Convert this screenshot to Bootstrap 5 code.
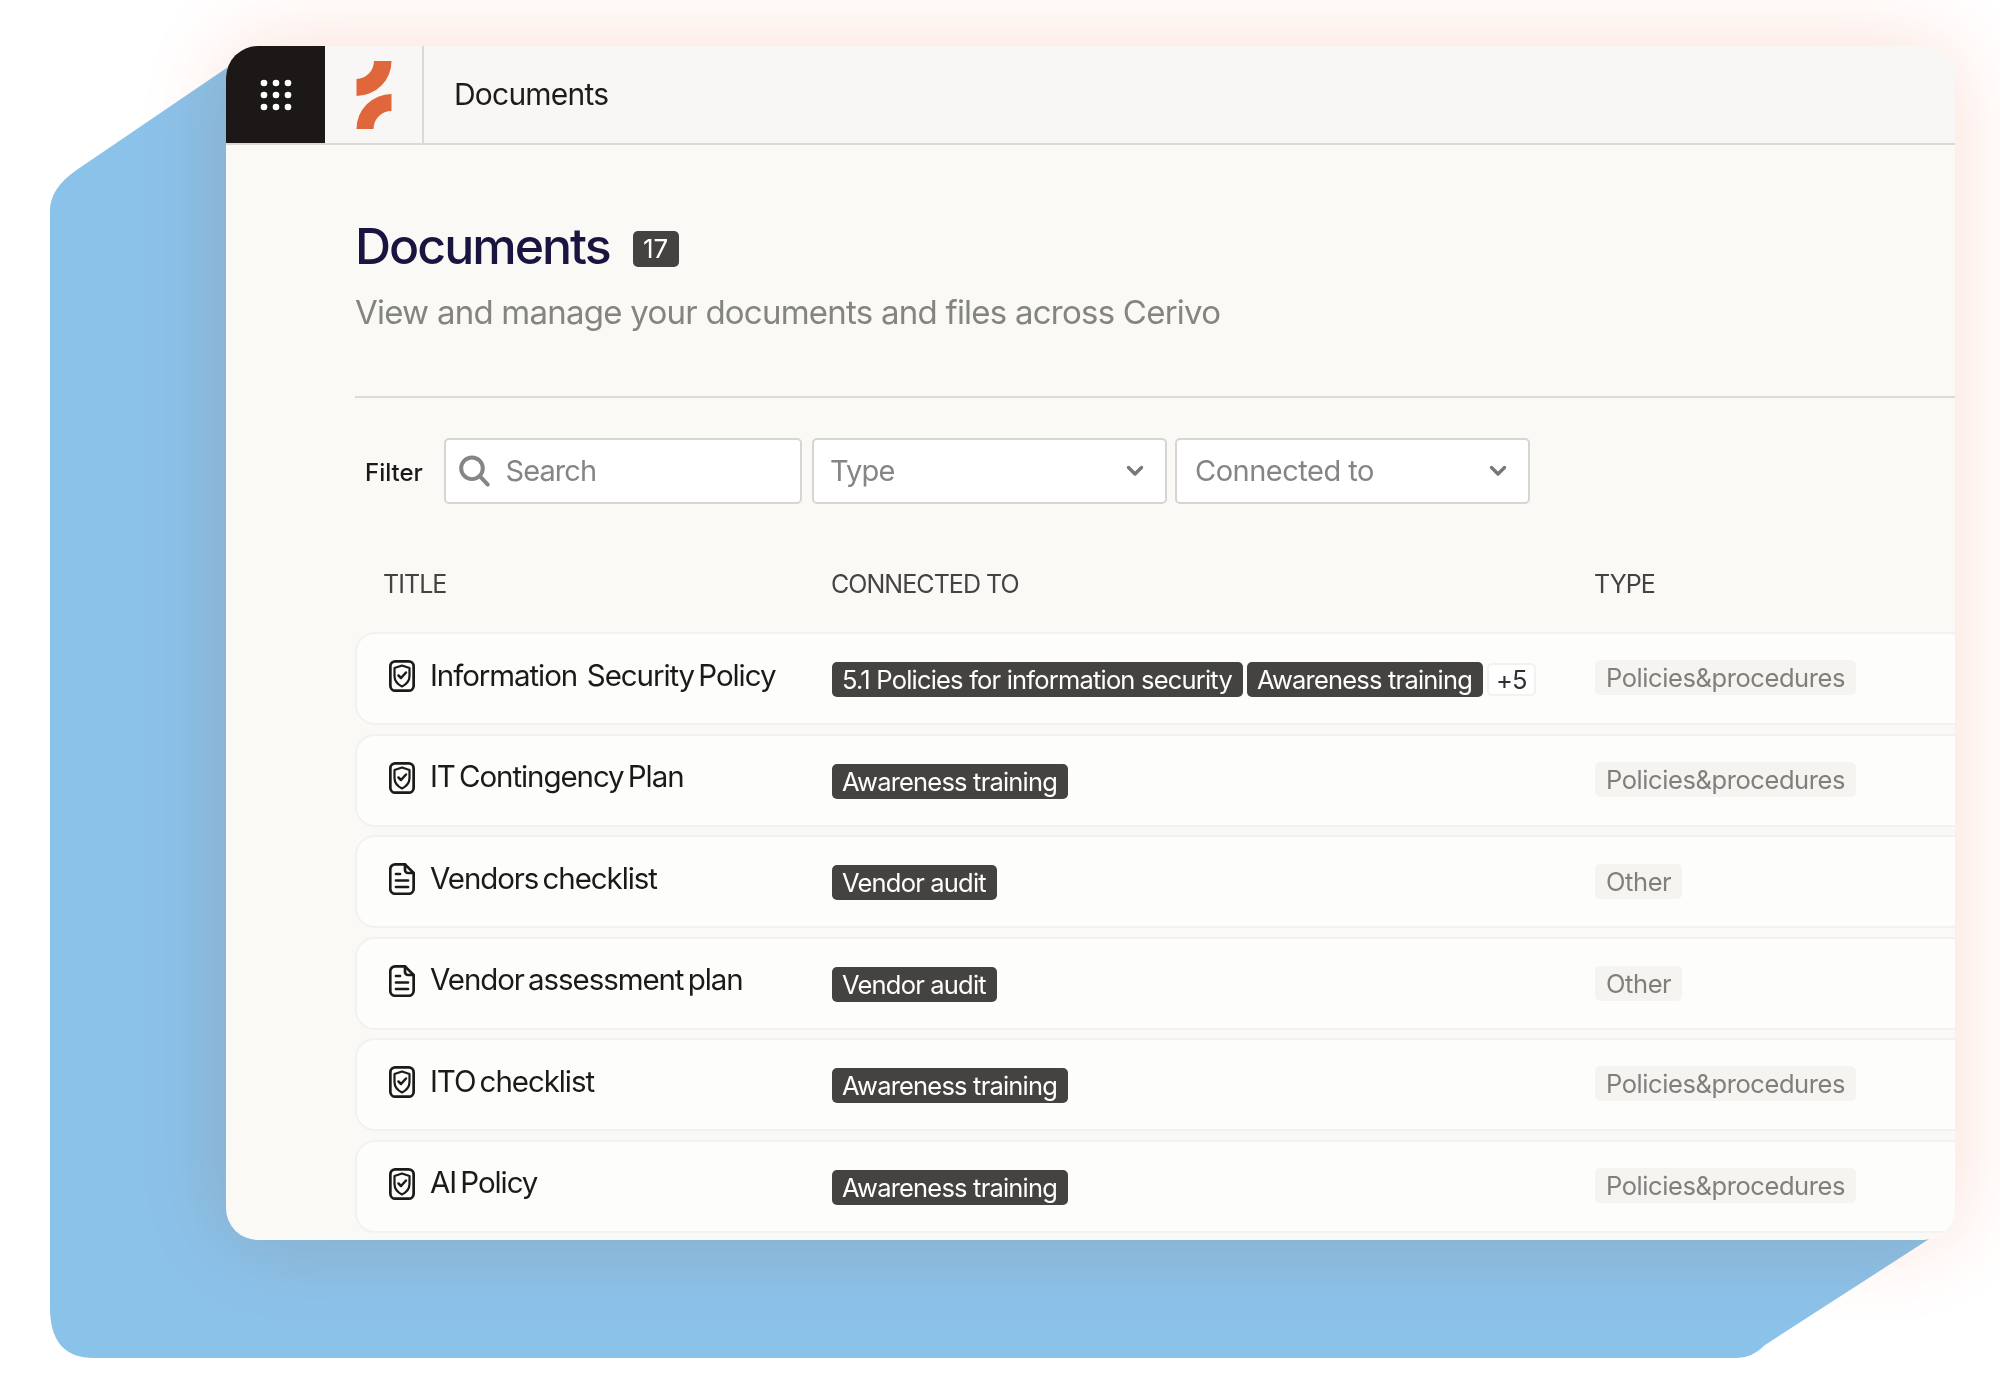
<!DOCTYPE html>
<html lang="en">
<head>
  <meta charset="UTF-8">
  <title>Documents</title>
  <link href="https://cdn.jsdelivr.net/npm/bootstrap@5.3.0/dist/css/bootstrap.min.css" rel="stylesheet">
  <style>
    body {
      font-family: "Inter", "Liberation Sans", sans-serif;
      background: #fff;
      color: #1b1a19;
      width: 2000px;
      height: 1400px;
      overflow: hidden;
    }

    .stage {
      position: relative;
      width: 2000px;
      height: 1400px;
      padding: 46px 45px 0 226px;
      isolation: isolate;
    }

    .backdrop {
      position: absolute;
      left: 0;
      top: 0;
      z-index: -2;
    }

    .glow {
      position: absolute;
      left: 226px;
      top: 46px;
      width: 1729px;
      height: 1194px;
      border-radius: 32px;
      box-shadow: 0 0 90px rgb(251, 221, 211);
      mix-blend-mode: multiply;
      z-index: -1;
    }

    .app-card {
      height: 1194px;
      background: #faf9f6;
      border-radius: 32px;
      overflow: hidden;
    }

    .app-bar {
      height: 99px;
      background: #f8f7f5;
      border-bottom: 2px solid #dad9d6;
    }

    .apps-btn {
      width: 99px;
      height: 97px;
      background: #1b1817;
    }

    .logo-cell {
      width: 99px;
      height: 97px;
      border-right: 2px solid #dad9d6;
    }

    .app-title {
      font-size: 30px;
      letter-spacing: -0.8px;
      padding-left: 30px;
      color: #1d1c1b;
    }

    .page-head {
      padding: 72px 0 0 129px;
    }

    .page-title {
      font-size: 50px;
      font-weight: 500;
      line-height: 58px;
      letter-spacing: -2px;
      color: #1a1540;
      margin: 0;
    }

    .count-badge {
      background: #444341;
      color: #fff;
      font-size: 26px;
      font-weight: 400;
      width: 46px;
      height: 36px;
      padding: 0;
      line-height: 36px;
      border-radius: 5px;
      margin-left: 23px;
      margin-top: 6px;
    }

    .page-sub {
      font-size: 33px;
      line-height: 40px;
      letter-spacing: -0.76px;
      color: #848481;
      margin: 17px 0 0;
    }

    .rule {
      margin: 64px 0 0 129px;
      border: 0;
      border-top: 2px solid #dcdbd8;
      opacity: 1;
    }

    .filter-bar {
      margin: 40px 0 0 139px;
      height: 66px;
    }

    .filter-label {
      font-size: 24px;
      font-weight: 500;
      width: 79px;
      padding-top: 4px;
    }

    .field {
      height: 66px;
      background-color: #fff;
      border: 2px solid #d6d5d2;
      border-radius: 5px;
      font-size: 29px;
      letter-spacing: -0.5px;
      color: #858583;
    }

    .search-box {
      width: 358px;
      margin-right: 10px;
      padding-left: 12px;
    }

    .search-box .form-control {
      border: 0;
      background: transparent;
      box-shadow: none;
      padding: 0 0 0 15px;
      font-size: 29px;
      letter-spacing: -0.9px;
      color: #858583;
    }

    .search-box .form-control::placeholder {
      color: #858583;
      opacity: 1;
    }

    .form-select.field {
      --bs-form-select-bg-img: url("data:image/svg+xml,%3csvg xmlns='http://www.w3.org/2000/svg' viewBox='0 0 18 12'%3e%3cpath fill='none' stroke='%23777' stroke-width='3.4' stroke-linecap='round' stroke-linejoin='round' d='M2.5 2.5 9 9l6.5-6.5'/%3e%3c/svg%3e");
      background-position: right 21px center;
      background-size: 18px 12px;
      padding: 0 50px 0 16px;
    }

    .select-type {
      width: 355px;
      margin-right: 8px;
      letter-spacing: -0.8px;
    }

    .select-linked {
      width: 355px;
    }

    .form-select.select-linked {
      padding-left: 18px;
    }

    .list-head {
      margin: 61px 0 0 129px;
      height: 40px;
      font-size: 25px;
      letter-spacing: -0.95px;
      color: #454341;
    }

    .list-head .col-title {
      width: 476px;
      padding-left: 28px;
    }

    .col-title {
      width: 475px;
      flex: none;
    }

    .col-linked {
      width: 763px;
      flex: none;
    }

    .doc-list {
      margin: 27px -40px 0 129px;
      gap: 8.5px;
      border-radius: 0;
    }

    .doc-list .list-group-item {
      height: 93px;
      background: #fdfdfb;
      border: 2px solid #f3f2ee;
      border-radius: 20px;
      padding: 0;
      margin: 0;
    }

    .doc-list .list-group-item + .list-group-item {
      border-top-width: 2px;
    }

    .doc-name {
      font-size: 29.5px;
      letter-spacing: -1.08px;
      word-spacing: -3px;
      padding-left: 32px;
      gap: 15px;
      margin-top: -5px;
      color: #1b1a19;
      white-space: nowrap;
    }

    .doc-name > span {
      margin-top: -2px;
    }

    .wide-gap {
      word-spacing: 2.5px;
    }

    .doc-icon {
      flex: none;
    }

    .tags {
      gap: 4px;
      margin-top: 2px;
    }

    .tag {
      font-size: 25.5px;
      font-weight: 400;
      letter-spacing: -0.8px;
      height: 35px;
      line-height: 35px;
      padding: 0 11px 0 10px;
      border-radius: 5px;
    }

    .tag-dark {
      background: #454341;
      color: #fff;
    }

    .tag-more {
      background: #fff;
      color: #33312f;
      border: 2px solid #f3f2ee;
      height: 33px;
      line-height: 30px;
      padding: 0 7px;
    }

    .tag-type {
      background: #f5f4f1;
      color: #807f7c;
      letter-spacing: -0.42px;
      padding: 0 11px;
      margin-top: -2px;
    }

    .tag-other {
      margin-top: 0;
    }
  </style>
</head>
<body>
  <div class="stage">
    <svg class="backdrop" width="2000" height="1400" viewBox="0 0 2000 1400">
      <path fill="#8bc2ea" d="M228 67 L78 169 Q50 188 50 210 V1308 Q50 1358 94 1358 H1737 Q1752 1358 1765 1345 L1940 1232 L1800 200 Z"/>
    </svg>
    <div class="glow"></div>

    <div class="app-card">
      <div class="app-bar d-flex">
        <div class="apps-btn d-flex align-items-center justify-content-center">
          <svg width="34" height="34" viewBox="0 0 34 34" fill="#fff">
            <circle cx="5" cy="5" r="3.3"/><circle cx="17" cy="5" r="3.3"/><circle cx="29" cy="5" r="3.3"/>
            <circle cx="5" cy="17" r="3.3"/><circle cx="17" cy="17" r="3.3"/><circle cx="29" cy="17" r="3.3"/>
            <circle cx="5" cy="29" r="3.3"/><circle cx="17" cy="29" r="3.3"/><circle cx="29" cy="29" r="3.3"/>
          </svg>
        </div>
        <div class="logo-cell d-flex align-items-center justify-content-center">
          <svg width="36" height="68" viewBox="0 0 36 68" fill="#e0663b">
            <path d="M18 0 H35.5 A35 35 0 0 1 .5 35 V18 A18 18 0 0 0 18 0 Z"/>
            <path d="M.5 68 A35 35 0 0 1 35.5 33 V50 A18 18 0 0 0 17.5 68 Z"/>
          </svg>
        </div>
        <div class="app-title d-flex align-items-center">Documents</div>
      </div>

      <div class="page-head">
        <div class="d-flex align-items-center">
          <h1 class="page-title">Documents</h1>
          <span class="badge count-badge">17</span>
        </div>
        <p class="page-sub">View and manage your documents and files across Cerivo</p>
      </div>
      <hr class="rule">

      <div class="filter-bar d-flex align-items-center">
        <div class="filter-label">Filter</div>
        <div class="field search-box d-flex align-items-center">
          <svg width="36" height="36" viewBox="0 0 36 36" fill="none" stroke="#858583" stroke-width="4.4" stroke-linecap="round">
            <circle cx="15.5" cy="15" r="12"/>
            <path d="M24.500 24 L33 33"/>
          </svg>
          <input class="form-control" type="text" placeholder="Search">
        </div>
        <select class="form-select field select-type"><option>Type</option></select>
        <select class="form-select field select-linked"><option>Connected to</option></select>
      </div>

      <div class="list-head d-flex align-items-center">
        <div class="col-title">TITLE</div>
        <div class="col-linked">CONNECTED TO</div>
        <div>TYPE</div>
      </div>

      <div class="list-group doc-list">
        <div class="list-group-item d-flex align-items-center">
          <div class="col-title doc-name d-flex align-items-center">
            <svg class="doc-icon" width="26" height="32" viewBox="0 0 26 32" fill="none" stroke="#1b1a19" stroke-linecap="round" stroke-linejoin="round"><rect x="1.35" y="1.35" width="23.3" height="29.3" rx="5" stroke-width="2.7"/><path stroke-width="2.2" d="M13 5.5 20.5 8v8c0 5-3.500 8.500-7.500 10.500C9 24.500 5.500 21 5.500 16V8Z"/><path stroke-width="2.5" d="M9.500 15.500 12 18l5-5.500"/></svg>
            <span><span class="wide-gap">Information Security</span> Policy</span>
          </div>
          <div class="col-linked tags d-flex align-items-center">
            <span class="badge tag tag-dark">5.1 Policies for information security</span>
            <span class="badge tag tag-dark">Awareness training</span>
            <span class="badge tag tag-more">+5</span>
          </div>
          <div><span class="badge tag tag-type">Policies&amp;procedures</span></div>
        </div>
        <div class="list-group-item d-flex align-items-center">
          <div class="col-title doc-name d-flex align-items-center">
            <svg class="doc-icon" width="26" height="32" viewBox="0 0 26 32" fill="none" stroke="#1b1a19" stroke-linecap="round" stroke-linejoin="round"><rect x="1.35" y="1.35" width="23.3" height="29.3" rx="5" stroke-width="2.7"/><path stroke-width="2.2" d="M13 5.5 20.5 8v8c0 5-3.500 8.500-7.500 10.500C9 24.500 5.500 21 5.500 16V8Z"/><path stroke-width="2.5" d="M9.500 15.500 12 18l5-5.500"/></svg>
            <span>IT Contingency Plan</span>
          </div>
          <div class="col-linked tags d-flex align-items-center">
            <span class="badge tag tag-dark">Awareness training</span>
          </div>
          <div><span class="badge tag tag-type">Policies&amp;procedures</span></div>
        </div>
        <div class="list-group-item d-flex align-items-center">
          <div class="col-title doc-name d-flex align-items-center">
            <svg class="doc-icon" width="26" height="32" viewBox="0 0 26 32" fill="none" stroke="#1b1a19" stroke-width="2.700" stroke-linecap="round" stroke-linejoin="round"><path d="M6.250 1.350H16L24.650 10v15.750a5 5 0 0 1-5 5H6.250a5 5 0 0 1-5-5V6.350a5 5 0 0 1 5-5Z"/><path d="M16 1.350V7a3 3 0 0 0 3 3h5.650"/><path d="M7 11h4M7 17.500h12M7 24h12"/></svg>
            <span>Vendors checklist</span>
          </div>
          <div class="col-linked tags d-flex align-items-center">
            <span class="badge tag tag-dark">Vendor audit</span>
          </div>
          <div><span class="badge tag tag-type tag-other">Other</span></div>
        </div>
        <div class="list-group-item d-flex align-items-center">
          <div class="col-title doc-name d-flex align-items-center">
            <svg class="doc-icon" width="26" height="32" viewBox="0 0 26 32" fill="none" stroke="#1b1a19" stroke-width="2.700" stroke-linecap="round" stroke-linejoin="round"><path d="M6.250 1.350H16L24.650 10v15.750a5 5 0 0 1-5 5H6.250a5 5 0 0 1-5-5V6.350a5 5 0 0 1 5-5Z"/><path d="M16 1.350V7a3 3 0 0 0 3 3h5.650"/><path d="M7 11h4M7 17.500h12M7 24h12"/></svg>
            <span>Vendor assessment plan</span>
          </div>
          <div class="col-linked tags d-flex align-items-center">
            <span class="badge tag tag-dark">Vendor audit</span>
          </div>
          <div><span class="badge tag tag-type tag-other">Other</span></div>
        </div>
        <div class="list-group-item d-flex align-items-center">
          <div class="col-title doc-name d-flex align-items-center">
            <svg class="doc-icon" width="26" height="32" viewBox="0 0 26 32" fill="none" stroke="#1b1a19" stroke-linecap="round" stroke-linejoin="round"><rect x="1.35" y="1.35" width="23.3" height="29.3" rx="5" stroke-width="2.7"/><path stroke-width="2.2" d="M13 5.5 20.5 8v8c0 5-3.500 8.500-7.500 10.500C9 24.500 5.500 21 5.500 16V8Z"/><path stroke-width="2.5" d="M9.500 15.500 12 18l5-5.500"/></svg>
            <span>ITO checklist</span>
          </div>
          <div class="col-linked tags d-flex align-items-center">
            <span class="badge tag tag-dark">Awareness training</span>
          </div>
          <div><span class="badge tag tag-type">Policies&amp;procedures</span></div>
        </div>
        <div class="list-group-item d-flex align-items-center">
          <div class="col-title doc-name d-flex align-items-center">
            <svg class="doc-icon" width="26" height="32" viewBox="0 0 26 32" fill="none" stroke="#1b1a19" stroke-linecap="round" stroke-linejoin="round"><rect x="1.35" y="1.35" width="23.3" height="29.3" rx="5" stroke-width="2.7"/><path stroke-width="2.2" d="M13 5.5 20.5 8v8c0 5-3.500 8.500-7.500 10.500C9 24.500 5.500 21 5.500 16V8Z"/><path stroke-width="2.5" d="M9.500 15.500 12 18l5-5.500"/></svg>
            <span>AI Policy</span>
          </div>
          <div class="col-linked tags d-flex align-items-center">
            <span class="badge tag tag-dark">Awareness training</span>
          </div>
          <div><span class="badge tag tag-type">Policies&amp;procedures</span></div>
        </div>
      </div>
    </div>
  </div>
  <script src="https://cdn.jsdelivr.net/npm/bootstrap@5.3.0/dist/js/bootstrap.bundle.min.js"></script>
</body>
</html>
